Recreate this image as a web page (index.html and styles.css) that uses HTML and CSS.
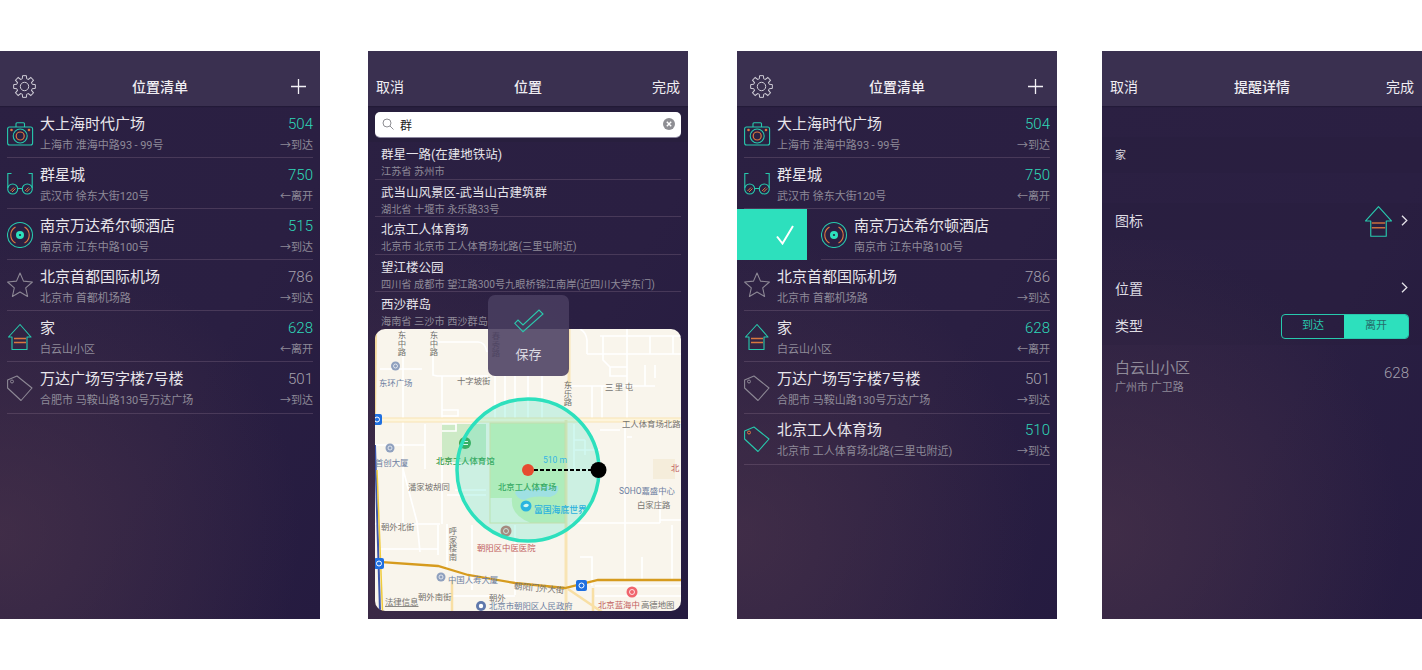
FILE: index.html
```html
<!DOCTYPE html>
<html lang="zh">
<head>
<meta charset="utf-8">
<title>位置清单</title>
<link rel="stylesheet" href="styles.css">
</head>
<body>
<svg class="sprite" width="0" height="0" aria-hidden="true">
  <defs>
    <path id="tooth" d="M-3.06-7.39L-2.2-7.69L-1.91-10.83L1.91-10.83L2.2-7.69L3.06-7.39"/>
    <symbol id="i-gear" viewBox="-11.5 -11.5 23 23">
      <g fill="none" stroke="#cfccd6" stroke-width="1">
        <use href="#tooth"/><use href="#tooth" transform="rotate(45)"/><use href="#tooth" transform="rotate(90)"/><use href="#tooth" transform="rotate(135)"/><use href="#tooth" transform="rotate(180)"/><use href="#tooth" transform="rotate(225)"/><use href="#tooth" transform="rotate(270)"/><use href="#tooth" transform="rotate(315)"/>
        <circle r="4.2"/>
      </g>
    </symbol>
    <symbol id="i-plus" viewBox="0 0 15 15"><path d="M7.5 0V15M0 7.5H15" stroke="#f2f0f5" stroke-width="1.3" fill="none"/></symbol>
    <symbol id="i-camera" viewBox="0 0 27 27">
      <g fill="none" stroke="#27c9ad" stroke-width="1.1">
        <rect x=".6" y="8" width="25" height="18" rx="2"/>
        <path d="M9 8V4.8a1 1 0 0 1 1-1h6.500a1 1 0 0 1 1 1V8"/>
        <circle cx="13.200" cy="17" r="7"/>
      </g>
      <circle cx="13.200" cy="17" r="4" fill="none" stroke="#e0793f" stroke-width="1.200"/>
      <circle cx="4.500" cy="11" r="1.300" fill="#e0793f"/><circle cx="22" cy="11" r="1.300" fill="#e0793f"/>
    </symbol>
    <symbol id="i-glasses" viewBox="0 0 27 27">
      <g fill="none" stroke="#27c9ad" stroke-width="1.1">
        <path d="M4.500 3.500H.8V18M21.500 3.500H25.200V18M10.500 18.500H15.500"/>
        <circle cx="5.700" cy="19" r="5"/><circle cx="20.300" cy="19" r="5"/>
      </g>
      <path d="M3.500 21L7 17.500M5 22L8.500 18.500M18.100 21L21.600 17.500M19.600 22L23.100 18.500" stroke="#e0793f" stroke-width="1" fill="none"/>
    </symbol>
    <symbol id="i-disc" viewBox="0 0 27 27">
      <circle cx="13" cy="14" r="12.500" fill="none" stroke="#27c9ad" stroke-width="1.100"/>
      <path d="M8.500 5.900A9.300 9.300 0 0 0 8.500 22.100M17.500 5.900A9.300 9.300 0 0 1 17.500 22.100" fill="none" stroke="#e0793f" stroke-width="1.100"/>
      <circle cx="13" cy="14" r="4" fill="#2de0bd"/><circle cx="13" cy="14" r="1.100" fill="#2a2040"/>
    </symbol>
    <symbol id="i-star" viewBox="0 0 27 27">
      <path d="M13 1L16.500 9.100L25.400 10L18.700 15.900L20.600 24.500L13 20L5.400 24.500L7.300 15.900L.6 10L9.500 9.100Z" fill="none" stroke="#8d8895" stroke-width="1.100" stroke-linejoin="round"/>
    </symbol>
    <symbol id="i-house" viewBox="0 0 27 27">
      <path d="M13 1.500L24 14H20V26.500H5V14H1.500Z" fill="none" stroke="#27c9ad" stroke-width="1.100" stroke-linejoin="round"/>
      <path d="M7 15.500H19M7 19.500H19" stroke="#d9773f" stroke-width="1.300" fill="none"/>
    </symbol>
    <symbol id="i-tag" viewBox="0 0 27 27">
      <path d="M.6 6L10 2L25 14L14 26.500L.6 14Z" fill="none" stroke="#8d8895" stroke-width="1.100" stroke-linejoin="round"/>
      <circle cx="5" cy="7.500" r="1.500" fill="none" stroke="#8d8895" stroke-width="1"/>
    </symbol>
    <symbol id="i-tag-on" viewBox="0 0 27 27">
      <path d="M.6 6L10 2L25 14L14 26.500L.6 14Z" fill="none" stroke="#27c9ad" stroke-width="1.100" stroke-linejoin="round"/>
      <circle cx="5" cy="7.500" r="1.500" fill="none" stroke="#e0793f" stroke-width="1"/>
    </symbol>
    <symbol id="i-chev" viewBox="0 0 7 11"><path d="M1 .8L5.800 5.500L1 10.200" fill="none" stroke="#e4e2e8" stroke-width="1.300"/></symbol>
  </defs>
</svg>

<main class="stage">

  <section class="screen">
    <header class="nav">
      <svg class="nav-gear"><use href="#i-gear"/></svg>
      <h1 class="nav-title">位置清单</h1>
      <svg class="nav-plus"><use href="#i-plus"/></svg>
    </header>
    <ul class="list">
      <li class="row"><svg class="ic"><use href="#i-camera"/></svg><div class="col"><div class="t">大上海时代广场</div><div class="s">上海市 淮海中路93<span class="dash">-</span>99号</div></div><div class="end"><div class="n on">504</div><div class="k">→到达</div></div></li>
      <li class="row"><svg class="ic"><use href="#i-glasses"/></svg><div class="col"><div class="t">群星城</div><div class="s">武汉市 徐东大街120号</div></div><div class="end"><div class="n on">750</div><div class="k">←离开</div></div></li>
      <li class="row"><svg class="ic"><use href="#i-disc"/></svg><div class="col"><div class="t">南京万达希尔顿酒店</div><div class="s">南京市 江东中路100号</div></div><div class="end"><div class="n on">515</div><div class="k">→到达</div></div></li>
      <li class="row"><svg class="ic"><use href="#i-star"/></svg><div class="col"><div class="t">北京首都国际机场</div><div class="s">北京市 首都机场路</div></div><div class="end"><div class="n">786</div><div class="k">→到达</div></div></li>
      <li class="row"><svg class="ic"><use href="#i-house"/></svg><div class="col"><div class="t">家</div><div class="s">白云山小区</div></div><div class="end"><div class="n on">628</div><div class="k">←离开</div></div></li>
      <li class="row"><svg class="ic"><use href="#i-tag"/></svg><div class="col"><div class="t">万达广场写字楼7号楼</div><div class="s">合肥市 马鞍山路130号万达广场</div></div><div class="end"><div class="n">501</div><div class="k">→到达</div></div></li>
    </ul>
  </section>

  <section class="screen s2">
    <header class="nav">
      <span class="nav-link">取消</span>
      <h1 class="nav-title">位置</h1>
      <span class="nav-link">完成</span>
    </header>
    <div class="searchband">
      <div class="search">
        <svg class="search-ic" viewBox="0 0 12 12"><circle cx="5" cy="5" r="4" fill="none" stroke="#8e8e93" stroke-width="1"/><path d="M8 8L11.500 11.500" stroke="#8e8e93" stroke-width="1"/></svg>
        <span class="search-text">群</span>
        <svg class="search-x" viewBox="0 0 12 12"><circle cx="6" cy="6" r="6" fill="#8e8e93"/><path d="M3.800 3.800L8.200 8.200M8.200 3.800L3.800 8.200" stroke="#fff" stroke-width="1.400"/></svg>
      </div>
    </div>
    <ul class="results">
      <li class="res"><div class="rt">群星一路(在建地铁站)</div><div class="rs">江苏省 苏州市</div></li>
      <li class="res"><div class="rt">武当山风景区-武当山古建筑群</div><div class="rs">湖北省 十堰市 永乐路33号</div></li>
      <li class="res"><div class="rt">北京工人体育场</div><div class="rs">北京市 北京市 工人体育场北路(三里屯附近)</div></li>
      <li class="res"><div class="rt">望江楼公园</div><div class="rs">四川省 成都市 望江路300号九眼桥锦江南岸(近四川大学东门)</div></li>
      <li class="res last"><div class="rt">西沙群岛</div><div class="rs">海南省 三沙市 西沙群岛</div></li>
    </ul>
    <div class="map">
      <svg class="map-svg" viewBox="375 329 306 282">
        <rect x="375" y="329" width="306" height="282" fill="#f9f5ec"/>
        <rect x="653" y="459" width="22" height="20" fill="#f5eddb"/>
        <rect x="442" y="424" width="44" height="38" fill="#cdeac6"/>
        <g fill="none" stroke="#fff" stroke-width="1.700">
          <path d="M403 329V469L417 522L420 552M403 469V524"/>
          <path d="M433 329V375L437 376H488M442 376V420M425 424V469M433 342H478Q485 342 487 352"/>
          <path d="M380 369H422M375 445H425M375 524H440M438 525V555M472 525V590M515 525V595M380 549H438"/>
          <path d="M442 410H458V416H442M442 424H456V431H442"/>
          <path d="M455 490H486M442 462V524M447 495H486M447 524V570"/>
          <path d="M587 340V354M580 329Q586 332 587 340M587 354H681M600 336H681M603 336V360L610 367H627M610 367V376H627M650 336V354M673 336V354"/>
          <path d="M570 386H655M592 386V419M602 386V419M645 365V386M655 365V378"/>
          <path d="M627 329V420M625 420V580M627 437H632M570 523H660M660 520H681M580 557H592V586M672 525V580M642 557V580M660 490V523"/>
          <path d="M595 586H681M595 596H681M600 430H620M575 450H600M490 596H515M452 596H515"/>
          <path d="M495 376V420M505 376V420M515 376V420M528 376V420M542 376V420"/>
          <path d="M574 424V470M574 440H585M585 440V455"/>
        </g>
        <path d="M375 420H681" stroke="#f9e4b4" stroke-width="5" fill="none"/>
        <path d="M375 420H681" stroke="#fef5dc" stroke-width="3" fill="none"/>
        <path d="M569 329V386M566 420V611" stroke="#f8e4b4" stroke-width="3" fill="none"/>
        <path d="M568 589L602 612M452 580V611M593 588V611" stroke="#f8dfa4" stroke-width="2.500" fill="none"/>
        <rect x="490" y="423" width="75" height="100" fill="#d2f0ba" stroke="#ecdfa6" stroke-width="1"/>
        <path d="M490.500 498H512Q510 515 530 522.500H490.500Z" fill="#f2f5e6"/>
        <path d="M515 493Q516 488 528 490Q540 486 558 486Q560 494 550 497Q530 495 525 500Q518 500 515 493Z" fill="#bfe0ee"/>
        <path d="M375 561.700L438 566L468 575L515 583L565 588L598 580L681 580" fill="none" stroke="#d69b1e" stroke-width="2.300"/>
        <path d="M376 329L375 420" stroke="#f3d89a" stroke-width="2" fill="none"/>
        <path d="M375 445L380 611" stroke="#3d56ad" stroke-width="2" fill="none"/>
        <path d="M377 470L382.500 611" stroke="#f0cb3c" stroke-width="1.500" fill="none"/>

        <circle cx="395.500" cy="366" r="4.500" fill="#8fa0be"/><circle cx="395.500" cy="366" r="2" fill="none" stroke="#fff" stroke-width=".7"/>
        <circle cx="390" cy="448" r="4.500" fill="#8fa0be"/><circle cx="390" cy="448" r="2" fill="none" stroke="#fff" stroke-width=".7"/>
        <circle cx="465" cy="443" r="6" fill="#3da34e"/><path d="M462 441.500H468M462 444.500H468" stroke="#fff" stroke-width="1"/>
        <circle cx="441" cy="577" r="4.500" fill="#8fa0be"/><circle cx="441" cy="577" r="2" fill="none" stroke="#fff" stroke-width=".7"/>
        <circle cx="481" cy="606" r="5" fill="#5f78ab"/><circle cx="481" cy="606" r="2.200" fill="#fff"/>
        <circle cx="506" cy="531" r="5.500" fill="#c7726e"/><circle cx="506" cy="531" r="2.500" fill="none" stroke="#fff" stroke-width=".8"/>
        <circle cx="632" cy="592" r="5.500" fill="#f0656e"/><circle cx="632" cy="592" r="2.500" fill="none" stroke="#fff" stroke-width=".8"/>
        <circle cx="526" cy="506" r="5.500" fill="#2ba9e8"/><path d="M523 506Q526 502 529 505Q527 509 523 506Z" fill="#fff"/>
        <g fill="#1f6fe0"><rect x="372" y="414" width="10" height="11" rx="2"/><rect x="374" y="558" width="10" height="11" rx="2"/><rect x="576" y="580" width="11" height="11" rx="2"/></g>
        <g fill="none" stroke="#fff" stroke-width="1"><circle cx="377" cy="419.500" r="2.500"/><circle cx="379" cy="563.500" r="2.500"/><circle cx="581.500" cy="585.500" r="2.500"/></g>

        <g class="ml">
          <text class="blu" x="379" y="386">东环广场</text>
          <text class="gry" x="457" y="384">十字坡街</text>
          <text class="grn" x="436" y="464">北京工人体育馆</text>
          <text class="blu" x="375" y="466">首创大厦</text>
          <text class="gry" x="622" y="427">工人体育场北路</text>
          <text class="gry sp" x="605" y="390">三里屯</text>
          <text class="grn" x="498" y="490">北京工人体育场</text>
          <text class="aqu" x="534" y="513">富国海底世界</text>
          <text class="gry" x="408" y="490">潘家坡胡同</text>
          <text class="blu" x="619" y="494">SOHO嘉盛中心</text>
          <text class="gry" x="637" y="508">白家庄路</text>
          <text class="gry" x="381" y="530">朝外北街</text>
          <text class="red" x="477" y="551">朝阳区中医医院</text>
          <text class="blu" x="448" y="583">中国人寿大厦</text>
          <text class="gry" transform="rotate(5 514 587)" x="514" y="589">朝阳门外大街</text>
          <text class="gry" x="418" y="600">朝外南街</text>
          <text class="gry und" x="385" y="605">法律信息</text>
          <text class="gry" x="489" y="601">朝外</text>
          <text class="blu" x="489" y="609">北京市朝阳区人民政府</text>
          <text class="red" x="598" y="608">北京蓝海中</text>
          <text class="gry" x="641" y="608">高德地图</text>
          <text class="red" x="671" y="471">北</text>
          <text class="gry v" x="567" y="381">东乐路</text>
          <text class="gry v" x="452" y="527">呼家楼南</text>
          <text class="gry v" x="401" y="331">东中路</text>
          <text class="gry v" x="433" y="331">东中路</text>
          <text class="gry v" x="495" y="332">春秀路</text>
        </g>

        <circle cx="528" cy="470" r="71" fill="#2de0bd" fill-opacity=".22" stroke="#2de0bd" stroke-width="3.500"/>
        <path d="M534 470H592" stroke="#000" stroke-width="2" stroke-dasharray="4 2" fill="none"/>
        <circle cx="528" cy="470" r="6" fill="#e64c30"/>
        <circle cx="598.500" cy="470" r="8" fill="#000"/>
        <text class="dist" x="543" y="463">510 m</text>
      </svg>
    </div>
    <div class="hud">
      <svg class="hud-check" viewBox="0 0 30 24"><path d="M.7 14.300L4 11L9 16L25 1L29 5L9 22.700Z" fill="none" stroke="#2bc9ad" stroke-width="1.100"/></svg>
      <span class="hud-text">保存</span>
    </div>
  </section>

  <section class="screen s3">
    <header class="nav">
      <svg class="nav-gear"><use href="#i-gear"/></svg>
      <h1 class="nav-title">位置清单</h1>
      <svg class="nav-plus"><use href="#i-plus"/></svg>
    </header>
    <ul class="list">
      <li class="row"><svg class="ic"><use href="#i-camera"/></svg><div class="col"><div class="t">大上海时代广场</div><div class="s">上海市 淮海中路93<span class="dash">-</span>99号</div></div><div class="end"><div class="n on">504</div><div class="k">→到达</div></div></li>
      <li class="row"><svg class="ic"><use href="#i-glasses"/></svg><div class="col"><div class="t">群星城</div><div class="s">武汉市 徐东大街120号</div></div><div class="end"><div class="n on">750</div><div class="k">←离开</div></div></li>
      <li class="swipe">
        <div class="swipe-act"><svg class="swipe-check" viewBox="0 0 18 20"><path d="M1 11.500L6.500 18.500L17 1" fill="none" stroke="#fff" stroke-width="2"/></svg></div>
        <div class="row swiped"><svg class="ic"><use href="#i-disc"/></svg><div class="col"><div class="t">南京万达希尔顿酒店</div><div class="s">南京市 江东中路100号</div></div></div>
      </li>
      <li class="row"><svg class="ic"><use href="#i-star"/></svg><div class="col"><div class="t">北京首都国际机场</div><div class="s">北京市 首都机场路</div></div><div class="end"><div class="n">786</div><div class="k">→到达</div></div></li>
      <li class="row"><svg class="ic"><use href="#i-house"/></svg><div class="col"><div class="t">家</div><div class="s">白云山小区</div></div><div class="end"><div class="n on">628</div><div class="k">←离开</div></div></li>
      <li class="row"><svg class="ic"><use href="#i-tag"/></svg><div class="col"><div class="t">万达广场写字楼7号楼</div><div class="s">合肥市 马鞍山路130号万达广场</div></div><div class="end"><div class="n">501</div><div class="k">→到达</div></div></li>
      <li class="row"><svg class="ic"><use href="#i-tag-on"/></svg><div class="col"><div class="t">北京工人体育场</div><div class="s">北京市 工人体育场北路(三里屯附近)</div></div><div class="end"><div class="n on">510</div><div class="k">→到达</div></div></li>
    </ul>
  </section>

  <section class="screen s4">
    <header class="nav">
      <span class="nav-link">取消</span>
      <h1 class="nav-title">提醒详情</h1>
      <span class="nav-link">完成</span>
    </header>
    <div class="form">
      <div class="f f-name"><span class="f-mini">家</span></div>
      <div class="f f-icon"><span class="f-label">图标</span><span class="f-right"><svg class="f-house" viewBox="0 0 26 30"><path d="M13 .7L25.500 14.500H20.500V29.300H5.500V14.500H.5Z" fill="none" stroke="#27c9ad" stroke-width="1.100" stroke-linejoin="round"/><path d="M6.500 16.500H19.500M6.500 21H19.500" stroke="#c9703e" stroke-width="1.500"/></svg><svg class="f-chev"><use href="#i-chev"/></svg></span></div>
      <div class="f f-loc"><span class="f-label">位置</span><svg class="f-chev"><use href="#i-chev"/></svg></div>
      <div class="f f-type"><span class="f-label">类型</span>
        <div class="seg"><span class="seg-a">到达</span><span class="seg-b">离开</span></div>
      </div>
      <div class="f f-addr"><div><div class="a-t">白云山小区</div><div class="a-s">广州市 广卫路</div></div><div class="a-n">628</div></div>
    </div>
  </section>

</main>
</body>
</html>
```
FILE: styles.css
```css
* { box-sizing: border-box; }
html, body { margin: 0; padding: 0; background: #fff; }
body {
  width: 1422px;
  height: 670px;
  overflow: hidden;
  font-family: Roboto, "Noto Sans CJK SC", sans-serif;
  color: #eceaf0;
}
ul { list-style: none; margin: 0; padding: 0; }
h1 { margin: 0; }
.sprite { position: absolute; }

.stage { display: flex; padding-top: 51px; }
.screen {
  position: relative;
  width: 320px;
  height: 568px;
  flex: none;
  overflow: hidden;
  display: flex;
  flex-direction: column;
  background:
    radial-gradient(ellipse 300px 300px at 0% 85%, rgba(82, 56, 76, .55) 0%, rgba(82, 56, 76, 0) 100%),
    linear-gradient(120deg, #2b2042 0%, #2a1f42 60%, #251b40 100%);
}
.s2 { margin-left: 48px; }
.s3 { margin-left: 49px; }
.s4 { margin-left: 45px; }

.nav {
  height: 55px;
  flex: none;
  padding: 20px 8px 0;
  display: flex;
  align-items: center;
  justify-content: space-between;
  position: relative;
  background: #3a3050;
  box-shadow: 0 1px 1px rgba(30, 24, 50, .6);
  z-index: 1;
}
.nav-title {
  position: absolute;
  left: 0;
  right: 0;
  top: 20px;
  line-height: 32px;
  text-align: center;
  font-size: 14px;
  font-weight: 500;
  color: #efedf2;
}
.nav-link { font-size: 14px; line-height: 32px; margin-top: -3px; color: #efedf2; }
.nav-gear { width: 23px; height: 23px; margin: -5px 0 0 5px; }
.nav-plus { width: 15px; height: 15px; margin: -5px 6px 0 0; }

.list { padding-top: 1px; }
.row {
  height: 51.100px;
  margin: 0 7px;
  display: flex;
  align-items: center;
  border-bottom: 1px solid rgba(150, 125, 150, .28);
}
.ic { width: 27px; height: 27px; flex: none; margin-right: 6px; }
.col { flex: 1; min-width: 0; padding-top: 2px; }
.t { font-size: 15px; line-height: 20px; color: #e8e6eb; }
.s { font-size: 11px; line-height: 14px; margin-top: 5px; color: #8e8a98; }
.dash { padding: 0 2.5px; }
.end { text-align: right; padding-top: 2px; }
.n { font-size: 15px; line-height: 20px; font-weight: 300; color: #a5a1ad; }
.n.on { color: #2fd8b8; }
.k { font-size: 11px; line-height: 14px; margin-top: 5px; color: #8e8a98; }

.swipe { height: 51.100px; display: flex; }
.swipe-act {
  width: 70px;
  height: 51px;
  flex: none;
  background: #2de0bd;
  display: flex;
  align-items: center;
  padding-left: 39px;
}
.swipe-check { width: 18px; height: 20px; }
.row.swiped { flex: 1; margin: 0 0 0 14px; }

.searchband { height: 36px; flex: none; padding: 6px 7px 0; background: #281f3e; }
.search {
  height: 24.500px;
  background: #fff;
  border-radius: 5px;
  display: flex;
  align-items: center;
  padding: 0 6px 0 7px;
  box-shadow: 0 1px 0 #8d88a0;
}
.search-ic { width: 12px; height: 12px; flex: none; }
.search-text { flex: 1; font-size: 12px; color: #222; margin-left: 6px; }
.search-x { width: 12px; height: 12px; flex: none; }

.results { flex: none; }
.res {
  height: 37.500px;
  margin: 0 7px;
  padding-left: 6px;
  border-bottom: 1px solid rgba(150, 125, 150, .28);
}
.res.last { height: 37px; border-bottom: 0; }
.rt { font-size: 12.500px; line-height: 17px; padding-top: 4px; box-sizing: content-box; color: #e6e4ea; white-space: nowrap; }
.rs { font-size: 10.200px; line-height: 13px; margin-top: 2px; color: #8e8a98; white-space: nowrap; }

.map {
  width: 306px;
  height: 282px;
  margin: 0 7px;
  flex: none;
  border-radius: 10px;
  overflow: hidden;
}
.map-svg { display: block; width: 306px; height: 282px; }
.ml text { font-family: Roboto, "Noto Sans CJK SC", sans-serif; font-size: 8.400px; }
.ml .blu { fill: #6d7fa2; }
.ml .gry { fill: #75736f; }
.ml .grn { fill: #3d9c4d; font-weight: 500; }
.ml .aqu { fill: #2ba5e6; font-weight: 500; font-size: 8.800px; }
.ml .red { fill: #c2615f; }
.ml .sp { letter-spacing: 1.500px; }
.ml .und { text-decoration: underline; }
.ml .v { writing-mode: vertical-rl; text-orientation: upright; }
.dist { font-family: Roboto, sans-serif; font-size: 8.500px; fill: #35b5e5; }

.hud {
  position: absolute;
  left: 120px;
  top: 244px;
  width: 81px;
  height: 81px;
  border-radius: 7px;
  background: rgba(73, 62, 96, .875);
  display: flex;
  flex-direction: column;
  align-items: center;
}
.hud-check { width: 30px; height: 24px; margin-top: 14px; }
.hud-text { font-size: 13px; line-height: 18px; margin-top: 13px; color: #dcdae2; }

.form { padding-top: 31px; }
.f { display: flex; align-items: center; justify-content: space-between; padding: 0 13px; }
.f-name, .f-icon, .f-loc, .f-type { background: rgba(34, 26, 60, .14); }
.f-name { height: 36px; font-size: 11px; color: #d6d3dc; }
.f-mini { margin-top: -3px; }
.f-icon { height: 37px; margin-top: 30px; }
.f-loc { height: 38px; margin-top: 30px; }
.f-type { height: 37px; }
.f-label { font-size: 14px; color: #dedce3; margin-top: -3px; }
.f-right { display: flex; align-items: center; gap: 9px; }
.f-house { width: 27px; height: 31px; margin-top: 0; }
.f-chev { width: 7px; height: 11px; margin: -3px 1px 0 0; }
.f-addr { height: 55px; align-items: flex-start; padding-top: 13px; }
.a-t { font-size: 15px; line-height: 20px; color: #8e8a98; }
.a-s { font-size: 11px; line-height: 14px; margin-top: 3px; color: #8e8a98; }
.a-n { font-size: 15px; line-height: 20px; font-weight: 300; color: #a5a1ad; margin-top: 5px; }

.seg {
  width: 128px;
  height: 24.500px;
  border: 1px solid #27c9ad;
  border-radius: 4px;
  display: flex;
  overflow: hidden;
  font-size: 11px;
  line-height: 22.500px;
  text-align: center;
}
.seg-a { width: 62px; color: #27c9ad; }
.seg-b { flex: 1; background: #2de0bd; color: #266e6c; }
```
